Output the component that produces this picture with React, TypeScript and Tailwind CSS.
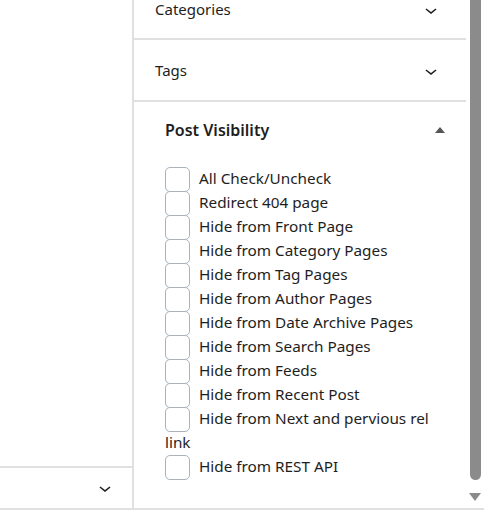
import type { ReactNode } from 'react';

const OPTIONS = [
  'All Check/Uncheck',
  'Redirect 404 page',
  'Hide from Front Page',
  'Hide from Category Pages',
  'Hide from Tag Pages',
  'Hide from Author Pages',
  'Hide from Date Archive Pages',
  'Hide from Search Pages',
  'Hide from Feeds',
  'Hide from Recent Post',
  'Hide from Next and pervious rel link',
  'Hide from REST API',
];

function Chevron() {
  return (
    <svg width="24" height="24" viewBox="0 0 24 24" className="fill-[#1e1e1e]">
      <path d="M17.5 11.6L12 16l-5.5-4.4.9-1.2L12 14l4.5-3.6 1 1.2z" />
    </svg>
  );
}

function PanelRow({ children, className }: { children: ReactNode; className?: string }) {
  return (
    <div className={`flex items-center justify-between pl-[21px] pr-[23px] border-b-2 border-[#e0e0e0] ${className ?? ''}`}>
      <span className="text-[15px] text-[#1e1e1e]">{children}</span>
      <Chevron />
    </div>
  );
}

export default function App() {
  return (
    <div className="w-[484px] h-[525px] bg-white overflow-hidden" style={{ fontFamily: '"Noto Sans", sans-serif' }}>
      <div className="flex h-[510px] border-b-2 border-[#e0e0e0]">
        {/* left column */}
        <div className="w-[134px] flex flex-col border-r-2 border-[#e0e0e0]">
          <div className="flex-1" />
          <div className="h-[42px] border-t-2 border-[#e0e0e0] flex items-center justify-end pr-[15px]">
            <Chevron />
          </div>
        </div>

        {/* sidebar panel */}
        <div className="w-[332px] flex flex-col">
          <PanelRow className="h-[59px] -mt-[19px]">Categories</PanelRow>
          <PanelRow className="h-[62px] pt-[1px]">Tags</PanelRow>

          <div className="pl-[31px] pr-[20px] pt-[16px]">
            <div className="flex items-center justify-between">
              <span className="text-[16px] font-semibold text-[#1e1e1e]">Post Visibility</span>
              <svg width="12" height="8" viewBox="0 0 12 8" className="fill-[#555]">
                <path d="M1 7L6 1l5 6z" />
              </svg>
            </div>
            <div className="mt-[24px] w-[281px] text-[15.3px] leading-[24px] text-[#1e1e1e]">
              {OPTIONS.map((label) => (
                <div key={label}>
                  <span className="inline-block w-[25px] h-[25px] align-middle -my-[4px] border border-[#aab2bb] rounded-[5px] bg-white mr-[9px]" />
                  {label}
                </div>
              ))}
            </div>
          </div>
        </div>

        {/* scrollbar */}
        <div className="w-[18px] flex flex-col items-center pb-[4px]">
          <div className="w-[11px] flex-1 bg-[#8b8b8b] rounded-b-[6px]" />
          <svg width="12" height="10" viewBox="0 0 12 10" className="fill-[#8b8b8b] mt-[12px] mb-[2px]">
            <path d="M0 1h12L6 9z" />
          </svg>
        </div>
      </div>
    </div>
  );
}
